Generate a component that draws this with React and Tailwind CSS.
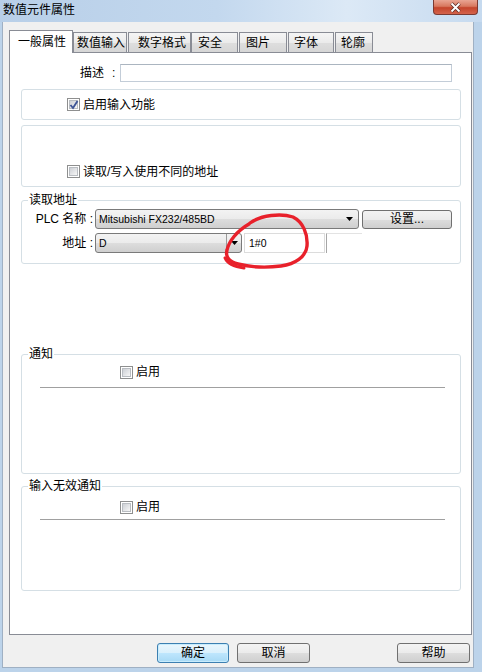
import React from 'react'

const winBtn = 'bg-[linear-gradient(#f3f3f3_0%,#ebebeb_50%,#dddddd_51%,#cfcfcf_100%)]'

const tabs = [
    { label: '一般属性', cls: 'w-[64px] pl-[8px]', active: true },
    { label: '数值输入', cls: 'w-[54px] pl-[3px]' },
    { label: '数字格式', cls: 'w-[63px] ml-[1px] pl-[9px]' },
    { label: '安全', cls: 'w-[47px] pl-[6px]' },
    { label: '图片', cls: 'w-[48px] ml-[1px] pl-[6px]' },
    { label: '字体', cls: 'w-[46px] ml-[1px] pl-[5px]' },
    { label: '轮廓', cls: 'w-[38px] ml-[1px] pl-[5px]' },
]

function Checkbox({ checked }) {
    return (
        <span className="relative flex w-[13px] h-[13px] shrink-0 border border-[#8e8f8f] bg-white p-[1px]">
            <span className="flex-1 border border-[#b9bdc2] bg-linear-to-br from-[#cdd0d5] to-[#f7f7f7]" />
            {checked && (
                <svg className="absolute left-[1px] top-[1px]" width="10" height="10" viewBox="0 0 10 10">
                    <path d="M1.5 5 L4 8 L8.5 1" fill="none" stroke="#3f5596" strokeWidth="1.9" />
                </svg>
            )}
        </span>
    )
}

function Arrow() {
    return (
        <svg width="7" height="4" viewBox="0 0 7 4">
            <path d="M0 0h7L3.5 4z" fill="#000" />
        </svg>
    )
}

function Group({ title, className, children }) {
    return (
        <div className={`relative ml-[11px] w-[440px] shrink-0 rounded-[3px] border border-[#d5dfe5] ${className}`}>
            {title && (
                <span className="absolute left-[6px] -top-[8px] bg-white px-[1px] leading-[14px]">{title}</span>
            )}
            {children}
        </div>
    )
}

export default function App() {
    return (
        <div className="relative w-[482px] h-[672px] overflow-hidden flex flex-col bg-[#bcd3ea] text-[12px] leading-[14px] text-black font-['Liberation_Sans','Noto_Sans_CJK_SC',sans-serif]">
            {/* title bar */}
            <div className="h-[22px] shrink-0 flex items-start bg-[linear-gradient(90deg,#b8cfe8_0%,#c3d8ee_45%,#dce9f6_72%,#c6daef_100%)]">
                <span className="pl-[3px] pt-[3px]">数值元件属性</span>
                <div className="ml-auto mr-[4px] w-[45px] h-[15px] flex items-center justify-center rounded-b-[4px] border border-t-0 border-[#7b3a32] bg-[linear-gradient(#e9a593_0%,#d8785f_45%,#c4452c_55%,#d4634b_100%)]">
                    <svg width="13" height="11" viewBox="0 0 13 11">
                        <path d="M2.5 1.5l8 8M10.5 1.5l-8 8" stroke="#5a2b25" strokeWidth="3.4" />
                        <path d="M2.5 1.5l8 8M10.5 1.5l-8 8" stroke="#fff" strokeWidth="1.9" />
                    </svg>
                </div>
            </div>

            {/* client area */}
            <div className="flex-1 ml-[2px] mr-[8px] mb-[4px] flex flex-col bg-[#f0f0f0] border-x border-b border-[#9fb0c3] pl-[6px] pr-[1px] pt-[8px]">
                <div className="h-[22px] flex items-end">
                    {tabs.map((t) => (
                        <div
                            key={t.label}
                            className={
                                t.active
                                    ? `${t.cls} relative z-10 -mb-px h-[23px] flex items-center whitespace-nowrap overflow-hidden bg-white border border-b-0 border-[#898c95]`
                                    : `${t.cls} h-[20px] flex items-center whitespace-nowrap overflow-hidden border border-b-0 border-[#898c95] bg-[linear-gradient(#f5f5f5_0%,#ebebeb_50%,#dedede_51%,#d6d6d6_100%)]`
                            }
                        >
                            {t.label}
                        </div>
                    ))}
                </div>

                {/* tab page */}
                <div className="h-[583px] flex flex-col bg-white border border-[#898c95]">
                    <div className="mt-[11px] h-[18px] flex items-center">
                        <span className="ml-[70px]">描述</span>
                        <span className="ml-[8px]">:</span>
                        <div className="ml-[5px] w-[332px] h-[18px] border border-[#c3cdd8] border-t-[#abb5c0]" />
                    </div>

                    <Group className="mt-[7px] h-[31px] flex items-center pl-[45px]">
                        <Checkbox checked />
                        <span className="ml-[3px]">启用输入功能</span>
                    </Group>

                    <Group className="mt-[5px] h-[62px] flex items-start pl-[45px] pt-[39px]">
                        <Checkbox />
                        <span className="ml-[3px]">读取/写入使用不同的地址</span>
                    </Group>

                    <Group title="读取地址" className="mt-[13px] h-[64px] flex flex-col pt-[8px]">
                        <div className="flex items-center">
                            <span className="w-[73px] text-right pr-[2px]">PLC 名称 :</span>
                            <div className={`w-[264px] h-[20px] flex items-center pl-[3px] pr-[5px] rounded-[3px] border border-[#7a7a7a] ${winBtn}`}>
                                <span className="flex-1 text-[10.5px]">Mitsubishi FX232/485BD</span>
                                <Arrow />
                            </div>
                            <div className={`ml-[3px] w-[90px] h-[19px] flex items-center justify-center rounded-[3px] border border-[#707070] ${winBtn}`}>
                                设置...
                            </div>
                        </div>
                        <div className="mt-[4px] flex items-center">
                            <span className="w-[73px] text-right pr-[2px]">地址 :</span>
                            <div className={`w-[147px] h-[20px] flex rounded-[3px] border border-[#7a7a7a] ${winBtn}`}>
                                <span className="flex-1 flex items-center pl-[3px] text-[10.5px]">D</span>
                                <span className="w-[15px] flex items-center justify-center border-l border-[#9a9a9a]">
                                    <Arrow />
                                </span>
                            </div>
                            <div className="ml-[2px] w-[81px] h-[20px] flex items-center pl-[4px] border border-[#dcdcdc] text-[10.5px]">1#0</div>
                            <div className="ml-[1px] w-[36px] h-[20px] border-l border-t border-l-[#a6a6a6] border-t-[#e3e3e3]" />
                        </div>
                    </Group>

                    <Group title="通知" className="mt-[90px] h-[120px] flex flex-col pt-[10px]">
                        <div className="flex items-center pl-[98px]">
                            <Checkbox />
                            <span className="ml-[3px]">启用</span>
                        </div>
                        <div className="mt-[8px] ml-[18px] w-[405px] h-px bg-[#a0a0a0]" />
                    </Group>

                    <Group title="输入无效通知" className="mt-[12px] h-[105px] flex flex-col pt-[13px]">
                        <div className="flex items-center pl-[98px]">
                            <Checkbox />
                            <span className="ml-[3px]">启用</span>
                        </div>
                        <div className="mt-[5px] ml-[18px] w-[405px] h-px bg-[#a0a0a0]" />
                    </Group>
                </div>

                {/* dialog buttons */}
                <div className="flex pt-[8px] pr-[2px]">
                    <button className="ml-[148px] w-[72px] h-[20px] rounded-[3px] border border-[#3c7fb1] shadow-[inset_0_0_0_1px_#c8ecfc] bg-[linear-gradient(#eaf6fd_0%,#d9f0fc_50%,#bee6fd_51%,#a7d9f5_100%)]">
                        确定
                    </button>
                    <button className={`ml-[8px] w-[73px] h-[20px] rounded-[3px] border border-[#707070] ${winBtn}`}>
                        取消
                    </button>
                    <button className={`ml-auto w-[73px] h-[20px] rounded-[3px] border border-[#707070] ${winBtn}`}>
                        帮助
                    </button>
                </div>
            </div>

            {/* red hand-drawn annotation */}
            <svg className="absolute inset-0 pointer-events-none" width="482" height="672" viewBox="0 0 482 672">
                <path
                    d="M250 223 C261 215 281 213 293 217 C303 222 308 234 307 246 C306 257 295 264 281 266 C266 268 250 267 238 264 C230 262 225 258 227 250 C229 241 237 231 249 224"
                    fill="none"
                    stroke="#e8212b"
                    strokeWidth="3.4"
                    strokeLinecap="round"
                />
                <path d="M225 258 C228 265 236 267 244 268" fill="none" stroke="#e8212b" strokeWidth="3" strokeLinecap="round" />
            </svg>
        </div>
    )
}
